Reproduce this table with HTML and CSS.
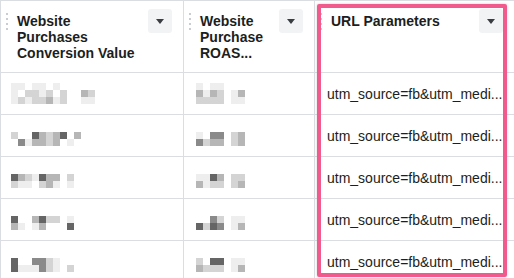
FILE: index.html
```html
<!DOCTYPE html>
<html lang="en">
<head>
<meta charset="utf-8">
<title>Columns</title>
<link rel="stylesheet" href="styles.css">
</head>
<body>
<div class="wrap">
  <div class="table">
    <div class="hcell">
      <span class="dots"></span>
      <span class="title">Website Purchases Conversion Value</span>
      <span class="menu"><span class="caret"></span></span>
    </div>
    <div class="hcell">
      <span class="dots"></span>
      <span class="title">Website Purchase ROAS...</span>
      <span class="menu"><span class="caret"></span></span>
    </div>
    <div class="hcell">
      <span class="dots"></span>
      <span class="title">URL Parameters</span>
      <span class="menu"><span class="caret"></span></span>
    </div>

    <div class="cell first">
      <svg class="blur12" viewBox="0 0 12 3" width="84" height="21" shape-rendering="crispEdges">
        <path class="a" d="M0 0h2v1h-2z M3 0h2v1h-2z M6 0h1v1h-1z M0 1h1v1h-1z M4 1h1v1h-1z M0 2h1v1h-1z M2 2h1v1h-1z M6 2h1v1h-1z M10 2h2v1h-2z"/>
        <path class="b" d="M2 1h2v1h-2z M5 1h1v1h-1z M7 1h1v1h-1z M11 1h1v1h-1z M1 2h1v1h-1z M3 2h2v1h-2z M7 2h1v1h-1z"/>
        <path class="c" d="M10 1h1v1h-1z M5 2h1v1h-1z"/>
      </svg>
    </div>
    <div class="cell">
      <svg class="blur7" viewBox="0 0 7 3" width="49" height="21" shape-rendering="crispEdges">
        <path class="a" d="M0 0h1v1h-1z M2 0h2v1h-2z M1 1h1v1h-1z M5 1h1v1h-1z M5 2h2v1h-2z"/>
        <path class="b" d="M3 1h1v1h-1z M0 2h4v1h-4z"/>
        <path class="c" d="M0 1h1v1h-1z M2 1h1v1h-1z M6 1h1v1h-1z"/>
      </svg>
    </div>
    <div class="cell text">utm_source=fb&amp;utm_medi...</div>

    <div class="cell first">
      <svg class="blur12" viewBox="0 0 12 3" width="84" height="21" shape-rendering="crispEdges">
        <path class="a" d="M2 2h1v1h-1z M8 2h1v1h-1z"/>
        <path class="b" d="M0 1h1v1h-1z M5 1h1v1h-1z M5 2h1v1h-1z"/>
        <path class="c" d="M4 1h1v1h-1z M6 1h1v1h-1z M9 1h1v1h-1z M3 2h2v1h-2z M6 2h1v1h-1z"/>
        <path class="d" d="M1 2h1v1h-1z"/>
        <path class="e" d="M3 1h1v1h-1z M7 1h1v1h-1z"/>
      </svg>
    </div>
    <div class="cell">
      <svg class="blur7" viewBox="0 0 7 3" width="49" height="21" shape-rendering="crispEdges">
        <path class="a" d="M0 1h1v1h-1z"/>
        <path class="b" d="M5 1h1v2h-1z M1 2h1v1h-1z"/>
        <path class="c" d="M6 1h1v2h-1z M2 2h2v1h-2z"/>
        <path class="d" d="M2 1h2v1h-2z M0 2h1v1h-1z"/>
      </svg>
    </div>
    <div class="cell text">utm_source=fb&amp;utm_medi...</div>

    <div class="cell first">
      <svg class="blur12" viewBox="0 0 12 3" width="84" height="21" shape-rendering="crispEdges">
        <path class="a" d="M3 1h1v1h-1z M1 2h2v1h-2z M6 2h1v1h-1z M8 2h1v1h-1z"/>
        <path class="b" d="M2 1h1v1h-1z M8 1h1v1h-1z M0 2h1v1h-1z M4 2h1v1h-1z"/>
        <path class="c" d="M1 1h1v1h-1z M5 1h2v1h-2z M5 2h1v1h-1z"/>
        <path class="e" d="M0 1h1v1h-1z M4 1h1v1h-1z"/>
      </svg>
    </div>
    <div class="cell">
      <svg class="blur7" viewBox="0 0 7 3" width="49" height="21" shape-rendering="crispEdges">
        <path class="a" d="M0 1h2v1h-2z M1 2h1v1h-1z"/>
        <path class="b" d="M5 1h2v1h-2z M2 2h2v1h-2z M5 2h1v1h-1z"/>
        <path class="c" d="M3 1h1v1h-1z M0 2h1v1h-1z M6 2h1v1h-1z"/>
        <path class="e" d="M2 1h1v1h-1z"/>
      </svg>
    </div>
    <div class="cell text">utm_source=fb&amp;utm_medi...</div>

    <div class="cell first">
      <svg class="blur12" viewBox="0 0 12 3" width="84" height="21" shape-rendering="crispEdges">
        <path class="a" d="M8 1h1v1h-1z M1 2h1v1h-1z M3 2h1v1h-1z"/>
        <path class="b" d="M5 1h2v1h-2z"/>
        <path class="c" d="M3 1h1v1h-1z M0 2h1v1h-1z M4 2h1v1h-1z"/>
        <path class="e" d="M0 1h1v1h-1z M4 1h1v1h-1z M8 2h1v1h-1z"/>
      </svg>
    </div>
    <div class="cell">
      <svg class="blur7" viewBox="0 0 7 3" width="49" height="21" shape-rendering="crispEdges">
        <path class="a" d="M5 1h2v1h-2z M5 2h1v1h-1z"/>
        <path class="b" d="M3 1h1v1h-1z M1 2h1v1h-1z"/>
        <path class="c" d="M6 2h1v1h-1z"/>
        <path class="d" d="M2 1h1v1h-1z M3 2h1v1h-1z"/>
        <path class="e" d="M0 2h1v1h-1z M2 2h1v1h-1z"/>
      </svg>
    </div>
    <div class="cell text">utm_source=fb&amp;utm_medi...</div>

    <div class="cell first">
      <svg class="blur12" viewBox="0 0 12 3" width="84" height="21" shape-rendering="crispEdges">
        <path class="a" d="M6 1h1v1h-1z M1 2h3v1h-3z M6 2h1v1h-1z"/>
        <path class="b" d="M5 1h1v1h-1z M5 2h1v1h-1z M8 2h1v1h-1z"/>
        <path class="d" d="M3 1h2v1h-2z M4 2h1v1h-1z"/>
        <path class="e" d="M0 1h1v2h-1z"/>
      </svg>
    </div>
    <div class="cell">
      <svg class="blur7" viewBox="0 0 7 3" width="49" height="21" shape-rendering="crispEdges">
        <path class="a" d="M5 1h2v1h-2z M5 2h1v1h-1z"/>
        <path class="b" d="M0 1h1v1h-1z M1 2h3v1h-3z"/>
        <path class="c" d="M0 2h1v1h-1z M6 2h1v1h-1z"/>
        <path class="e" d="M2 1h2v1h-2z"/>
      </svg>
    </div>
    <div class="cell text">utm_source=fb&amp;utm_medi...</div>
  </div>
  <div class="highlight"></div>
</div>
</body>
</html>
```

FILE: styles.css
```css
html, body {
  margin: 0;
  padding: 0;
  overflow: hidden;
  background: #ffffff;
}

body {
  font-family: "Liberation Sans", Arial, sans-serif;
  color: #1c1e21;
}

.wrap {
  position: relative;
  width: 514px;
  height: 278px;
  overflow: hidden;
}

.table {
  display: grid;
  grid-template-columns: 183px 131px 200px;
  grid-template-rows: 72px repeat(5, 42px);
  border-top: 1px solid #dadde1;
  border-left: 1px solid #dadde1;
  width: 515px;
}

.hcell,
.cell {
  box-sizing: border-box;
  border-right: 1px solid #dadde1;
  border-bottom: 1px solid #dadde1;
  background: #ffffff;
  overflow: hidden;
}

.hcell {
  display: flex;
  align-items: flex-start;
  padding: 8px 11px 0 5px;
}

.dots {
  flex: none;
  width: 2px;
  height: 17px;
  margin-top: 4px;
  background-image: repeating-linear-gradient(to bottom, #c9ccd1 0 2px, transparent 2px 5px);
}

.title {
  flex: 1;
  margin: 4px 6px 0 9px;
  font-size: 14px;
  line-height: 16px;
  font-weight: bold;
  color: #1c1e21;
}

.menu {
  flex: none;
  width: 24px;
  height: 24px;
  border-radius: 3px;
  background: #f2f3f5;
  display: flex;
  align-items: center;
  justify-content: center;
}

.caret {
  width: 0;
  height: 0;
  border-left: 4px solid transparent;
  border-right: 4px solid transparent;
  border-top: 5px solid #3a3d42;
  margin-top: 1px;
}

.cell {
  display: flex;
  align-items: center;
  padding-left: 12px;
  white-space: nowrap;
}

.cell.first {
  padding-left: 10px;
}

.cell.text {
  font-size: 14px;
  line-height: 16px;
  padding-top: 1px;
}

svg .a { fill: #eeeeee; }
svg .b { fill: #d4d4d4; }
svg .c { fill: #b6b6b6; }
svg .d { fill: #8a8a8a; }
svg .e { fill: #656565; }

.highlight {
  position: absolute;
  left: 317px;
  top: 4px;
  width: 190px;
  height: 273px;
  box-sizing: border-box;
  border: 4px solid #f05a8d;
  border-radius: 2px;
  box-shadow: 0 0 3px rgba(0, 0, 0, 0.18);
}
```
